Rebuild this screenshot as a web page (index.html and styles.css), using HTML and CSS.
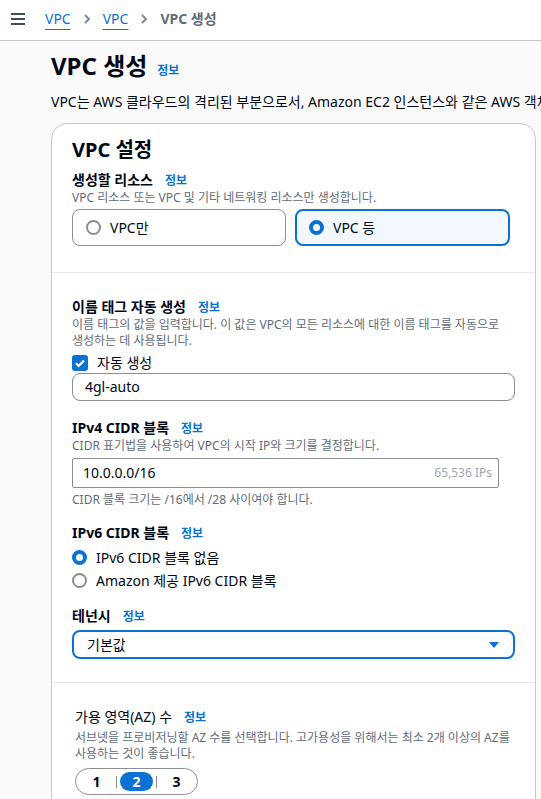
FILE: index.html
```html
<!DOCTYPE html>
<html lang="ko">
<head>
<meta charset="utf-8">
<link rel="stylesheet" href="styles.css">
</head>
<body>
<header class="topbar">
  <svg class="menu" width="16" height="14" viewBox="0 0 16 14"><path d="M1 2h14M1 7h14M1 12h14" stroke="#414d5c" stroke-width="2" fill="none"/></svg>
  <nav class="crumbs">
    <a class="crumb">VPC</a>
    <svg class="chev" width="10" height="12" viewBox="0 0 10 12"><path d="M3 2l4 4-4 4" stroke="#7d8998" stroke-width="2" fill="none"/></svg>
    <a class="crumb">VPC</a>
    <svg class="chev" width="10" height="12" viewBox="0 0 10 12"><path d="M3 2l4 4-4 4" stroke="#7d8998" stroke-width="2" fill="none"/></svg>
    <span class="crumb-current">VPC 생성</span>
  </nav>
</header>
<main class="page">
  <div class="title-row">
    <h1 class="title">VPC 생성</h1>
    <a class="info">정보</a>
  </div>
  <p class="lead">VPC는 AWS 클라우드의 격리된 부분으로서, Amazon EC2 인스턴스와 같은 AWS 객체로 채워집니다.</p>

  <section class="card">
    <div class="card-section first">
      <h2 class="card-title">VPC 설정</h2>
      <div class="label-row"><span class="label">생성할 리소스</span><a class="info">정보</a></div>
      <p class="desc">VPC 리소스 또는 VPC 및 기타 네트워킹 리소스만 생성합니다.</p>
      <div class="tiles">
        <div class="tile"><span class="radio"></span><span>VPC만</span></div>
        <div class="tile selected"><span class="radio on"></span><span>VPC 등</span></div>
      </div>
    </div>

    <div class="card-section second">
      <div class="field">
        <div class="label-row"><span class="label">이름 태그 자동 생성</span><a class="info">정보</a></div>
        <p class="desc">이름 태그의 값을 입력합니다. 이 값은 VPC의 모든 리소스에 대한 이름 태그를 자동으로 생성하는 데 사용됩니다.</p>
        <div class="check-row">
          <span class="checkbox"><svg width="12" height="12" viewBox="0 0 12 12"><path d="M2 6.2l2.7 2.7L10 3.4" stroke="#fff" stroke-width="2.2" fill="none"/></svg></span>
          <span>자동 생성</span>
        </div>
        <div class="input round">4gl-auto</div>
      </div>

      <div class="field f-ipv4">
        <div class="label-row"><span class="label">IPv4 CIDR 블록</span><a class="info">정보</a></div>
        <p class="desc">CIDR 표기법을 사용하여 VPC의 시작 IP와 크기를 결정합니다.</p>
        <div class="input cidr"><span>10.0.0.0/16</span><span class="ips">65,536 IPs</span></div>
        <p class="desc hint">CIDR 블록 크기는 /16에서 /28 사이여야 합니다.</p>
      </div>

      <div class="field f-ipv6">
        <div class="label-row"><span class="label">IPv6 CIDR 블록</span><a class="info">정보</a></div>
        <div class="radio-row first-radio"><span class="radio on"></span><span>IPv6 CIDR 블록 없음</span></div>
        <div class="radio-row"><span class="radio"></span><span>Amazon 제공 IPv6 CIDR 블록</span></div>
      </div>

      <div class="field f-tenancy">
        <div class="label-row"><span class="label">테넌시</span><a class="info">정보</a></div>
        <div class="select"><span>기본값</span><svg width="12" height="8" viewBox="0 0 12 8"><path d="M1 1h10L6 7z" fill="#0972d3"/></svg></div>
      </div>
    </div>

    <div class="card-section third">
      <div class="label-row"><span class="label light">가용 영역(AZ) 수</span><a class="info">정보</a></div>
      <p class="desc az-desc">서브넷을 프로비저닝할 AZ 수를 선택합니다. 고가용성을 위해서는 최소 2개 이상의 AZ를 사용하는 것이 좋습니다.</p>
      <div class="segmented">
        <span class="seg">1</span>
        <span class="sep"></span>
        <span class="seg active">2</span>
        <span class="sep"></span>
        <span class="seg">3</span>
      </div>
    </div>
  </section>
</main>
</body>
</html>
```

FILE: styles.css
```css
* { box-sizing: border-box; }
html, body { margin: 0; padding: 0; }
body {
  width: 541px;
  height: 799px;
  overflow: hidden;
  background: #fafafa;
  color: #000716;
  font-family: "Noto Sans", "Noto Sans CJK KR", sans-serif;
  font-size: 14px;
  line-height: 20px;
}
p { margin: 0; }
h1, h2 { margin: 0; }

.topbar {
  height: 41px;
  background: #fff;
  border-bottom: 1px solid #c6c6cd;
  display: flex;
  align-items: center;
  padding-left: 10px;
}
.menu { margin-right: 19px; margin-top: -2px; }
.crumbs { display: flex; align-items: center; gap: 11px; margin-top: -2px; }
.crumb {
  color: #0972d3;
  text-decoration: underline;
  text-underline-offset: 5px;
  text-decoration-thickness: 1px;
}
.crumb-current { color: #5f6b7a; font-weight: 700; }

.page { padding: 8px 0 0 51px; }
.title-row { display: flex; align-items: baseline; gap: 10px; }
.title { font-size: 24px; line-height: 34px; font-weight: 700; }
.info { color: #0972d3; font-size: 12px; font-weight: 700; line-height: 16px; }
.lead { margin-top: 9px; white-space: nowrap; }

.card {
  margin-top: 11px;
  width: 485px;
  background: #fff;
  border: 1px solid #c6c6cd;
  border-radius: 16px;
  height: 720px;
}
.card-section { padding: 0 20px; }
.card-section.first { padding-top: 12px; padding-bottom: 26px; border-bottom: 1px solid #e9ebed; }
.card-section.second { padding-top: 24px; padding-bottom: 23px; border-bottom: 1px solid #e9ebed; display: flex; flex-direction: column; }
.card-section.third { padding: 24px 22px 0 23px; }
.card-title { font-size: 20px; line-height: 28px; font-weight: 700; margin-bottom: 6px; }

.f-ipv4 { margin-top: 17px; }
.f-ipv6 { margin-top: 15px; }
.f-tenancy { margin-top: 14px; }

.label-row { display: flex; align-items: baseline; gap: 12px; }
.label { font-weight: 700; }
.label.light { font-weight: 400; }
.desc { font-size: 12px; line-height: 16px; color: #5f6b7a; word-break: keep-all; }
.hint { margin-top: 4px; }
.az-desc { margin-top: 3px; }

.tiles { display: grid; grid-template-columns: 214px 215px; gap: 9px; margin-top: 3px; }
.tile {
  height: 37px;
  border: 1px solid #8c8c94;
  border-radius: 8px;
  display: flex;
  align-items: center;
  gap: 9px;
  padding-left: 13px;
}
.tile.selected { border: 2px solid #0972d3; background: #f2f8fd; padding-left: 12px; }

.radio {
  width: 15px; height: 15px;
  border-radius: 50%;
  border: 2px solid #8c8c94;
  flex: none;
  background: #fff;
}
.radio.on { border: 4px solid #0972d3; }

.check-row { display: flex; align-items: center; gap: 9px; margin-top: 4px; }
.checkbox {
  width: 16px; height: 16px;
  border-radius: 3px;
  background: #0972d3;
  display: flex; align-items: center; justify-content: center;
}
.input {
  height: 28px;
  border: 1px solid #8c8c94;
  display: flex; align-items: center;
  padding-left: 12px;
}
.input.round { border-radius: 8px; }
.input.cidr {
  margin-top: 4px;
  width: 427px;
  height: 30px;
  border-radius: 2px;
  justify-content: space-between;
  padding: 0 6px 0 10px;
}
.ips { color: #9ba7b6; font-size: 12px; }

.radio-row { display: flex; align-items: center; gap: 9px; height: 23px; }
.first-radio { margin-top: 3px; }

.select {
  margin-top: 4px;
  height: 29px;
  border: 2px solid #0972d3;
  border-radius: 8px;
  display: flex; align-items: center; justify-content: space-between;
  padding: 0 13px 0 13px;
}

.segmented {
  margin-top: 6px;
  width: 123px;
  height: 27px;
  border: 1px solid #8c8c94;
  border-radius: 14px;
  display: flex; align-items: center;
  padding: 0 4px;
  font-weight: 700;
}
.seg { width: 34px; text-align: center; }
.seg.active { background: #0972d3; color: #fff; border-radius: 10px; height: 19px; line-height: 19px; }
.sep { width: 1px; height: 12px; background: #8c8c94; margin: 0 3px; }
```
